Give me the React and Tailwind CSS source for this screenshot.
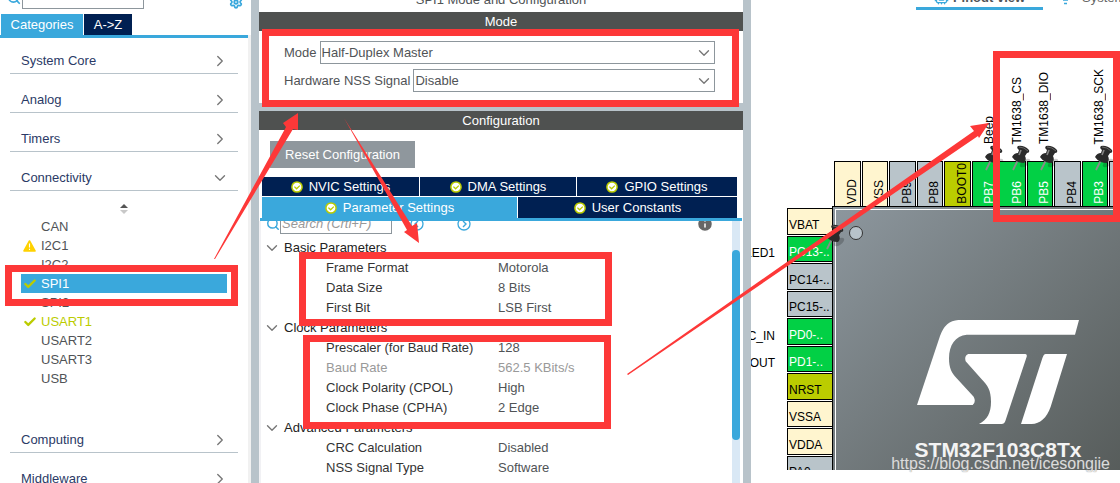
import React, { useState } from "react"
import { Search, Settings, ChevronRight, ChevronDown, Check, Cpu, Info } from "lucide-react"

const PERIPHERALS = [
  { name: "CAN" },
  { name: "I2C1", status: "warning" },
  { name: "I2C2" },
  { name: "SPI1", status: "ok" },
  { name: "SPI2" },
  { name: "USART1", status: "ok" },
  { name: "USART2" },
  { name: "USART3" },
  { name: "USB" },
]

const PARAMETERS = [
  {
    title: "Basic Parameters",
    rows: [
      { label: "Frame Format", value: "Motorola" },
      { label: "Data Size", value: "8 Bits" },
      { label: "First Bit", value: "LSB First" },
    ],
  },
  {
    title: "Clock Parameters",
    rows: [
      { label: "Prescaler (for Baud Rate)", value: "128" },
      { label: "Baud Rate", value: "562.5 KBits/s", readOnly: true },
      { label: "Clock Polarity (CPOL)", value: "High" },
      { label: "Clock Phase (CPHA)", value: "2 Edge" },
    ],
  },
  {
    title: "Advanced Parameters",
    rows: [
      { label: "CRC Calculation", value: "Disabled" },
      { label: "NSS Signal Type", value: "Software" },
    ],
  },
]

const PIN_COLORS = {
  power: "bg-[#fff5cf] text-black",
  free: "bg-[#b9c4ca] text-black",
  reset: "bg-[#bbcc00] text-black",
  used: "bg-[#02d045] text-white",
}

const TOP_PINS = [
  { name: "VDD", kind: "power" },
  { name: "VSS", kind: "power" },
  { name: "PB9", kind: "free" },
  { name: "PB8", kind: "free" },
  { name: "BOOT0", kind: "reset" },
  { name: "PB7", kind: "used", signal: "Beep" },
  { name: "PB6", kind: "used", signal: "TM1638_CS" },
  { name: "PB5", kind: "used", signal: "TM1638_DIO" },
  { name: "PB4", kind: "free" },
  { name: "PB3", kind: "used", signal: "TM1638_SCK" },
  { name: "PA15", kind: "free" },
  { name: "PA14", kind: "free" },
]

const LEFT_PINS = [
  { name: "VBAT", kind: "power" },
  { name: "PC13-..", kind: "used", signal: "LED1", pinned: true },
  { name: "PC14-..", kind: "free" },
  { name: "PC15-..", kind: "free" },
  { name: "PD0-..", kind: "used", signal: "RCC_OSC_IN" },
  { name: "PD1-..", kind: "used", signal: "RCC_OSC_OUT" },
  { name: "NRST", kind: "reset" },
  { name: "VSSA", kind: "power" },
  { name: "VDDA", kind: "power" },
  { name: "PA0-..", kind: "free" },
]

const StatusIcon = ({ status }) => {
  if (status === "ok") return <Check className="size-[14px] text-[#bbcc00]" strokeWidth={4} />
  if (status === "warning") {
    return (
      <svg viewBox="0 0 13 12" className="h-3 w-[13px]">
        <path d="M6.5 1 L12 11 H1 Z" fill="#ffd200" stroke="#ffd200" strokeWidth="1.6" strokeLinejoin="round" />
        <path d="M6.5 3.5 V7.5 M6.5 8.7 V10" stroke="#fff" strokeWidth="1.1" />
      </svg>
    )
  }
  return null
}

const CategoryRow = ({ name, open }) => {
  const Icon = open ? ChevronDown : ChevronRight
  return (
    <button className="mx-[10px] flex h-[39px] items-center justify-between border-b border-[#b8c3ca] pt-[13px] pr-[9px] pl-[11px] text-left text-[#2b3a66]">
      <span>{name}</span>
      <Icon className="size-[18px] text-[#777]" strokeWidth={1.8} />
    </button>
  )
}

const Sidebar = () => {
  const [selected, setSelected] = useState("SPI1")

  return (
    <aside className="flex w-[251px] shrink-0 flex-col overflow-hidden">
      <div className="flex h-[14px] shrink-0 items-end justify-between pr-2 pb-[5px] pl-[7px]">
        <div className="flex items-end gap-px">
          <Search className="mb-1 size-[14px] text-[#3aa8dc]" strokeWidth={3} />
          <input aria-label="Search peripherals" className="h-[22px] w-[122px] border border-[#8d969c] px-1" />
        </div>
        <Settings className="size-[14px] text-[#3aa8dc]" strokeWidth={3} />
      </div>
      <div className="mr-[2px] flex h-6 shrink-0 gap-px border-b-[3px] border-[#3aa8dc] pl-px text-white">
        <button className="w-[82px] bg-[#3aa8dc]">Categories</button>
        <button className="w-12 bg-[#002052]">A-&gt;Z</button>
      </div>
      <div className="-mt-[3px] flex flex-col border-r-[3px] border-[#f1f1f1]">
        <CategoryRow name="System Core" />
        <CategoryRow name="Analog" />
        <CategoryRow name="Timers" />
        <CategoryRow name="Connectivity" open />
        <div className="flex h-[26px] items-center justify-center pt-2">
          <svg viewBox="0 0 8 11" className="h-[11px] w-2">
            <path d="M0 5 L4 1 L8 5 Z" fill="#555" />
            <path d="M0 7 L4 11 L8 7 Z" fill="#c8c8c8" />
          </svg>
        </div>
        <ul className="mx-[21px] mb-[26px]">
          {PERIPHERALS.map((item) => {
            const active = item.name === selected
            const color = active
              ? "bg-[#3aa8dc] text-white"
              : item.status === "ok"
                ? "text-[#bbcc00]"
                : "text-[#505356]"
            return (
              <li key={item.name}>
                <button onClick={() => setSelected(item.name)} className={`flex h-[19px] w-full items-center ${color}`}>
                  <span className="flex w-5 pl-[2px]">
                    <StatusIcon status={item.status} />
                  </span>
                  {item.name}
                </button>
              </li>
            )
          })}
        </ul>
        <CategoryRow name="Computing" />
        <CategoryRow name="Middleware" />
      </div>
    </aside>
  )
}

const SectionBar = ({ children }) => (
  <h2 className="flex h-[19px] shrink-0 items-center justify-center bg-[#4f5150] text-white">{children}</h2>
)

const SelectField = ({ id, label, options }) => (
  <div className="flex h-[23px] items-center gap-[3px]">
    <label htmlFor={id}>{label}</label>
    <div className="relative h-full flex-1">
      <select id={id} className="h-full w-full appearance-none border border-[#8d969c] bg-white px-px">
        {options.map((option) => (
          <option key={option}>{option}</option>
        ))}
      </select>
      <ChevronDown className="pointer-events-none absolute top-[3px] right-[2px] size-[18px] text-[#777]" strokeWidth={1.8} />
    </div>
  </div>
)

const TabButton = ({ active, className, children }) => (
  <button className={`flex items-center justify-center gap-[6px] text-white ${active ? "bg-[#3aa8dc]" : "bg-[#002052]"} ${className}`}>
    <svg viewBox="0 0 12 12" className="size-3">
      <circle cx="6" cy="6" r="5.1" fill="#fff" stroke="#bbcc00" strokeWidth="1.5" />
      <path d="M3.4 5.6 L5.6 7.8 L8.8 4.6" fill="none" stroke="#bbcc00" strokeWidth="1.3" />
    </svg>
    {children}
  </button>
)

const NavCircle = ({ flip }) => (
  <svg viewBox="0 0 14 14" className={`size-[14px] ${flip ? "-scale-x-100" : ""}`} fill="none" stroke="#3aa8dc">
    <circle cx="7" cy="7" r="6" strokeWidth="1.3" />
    <path d="M6 4 L9 7 L6 10" strokeWidth="1.4" />
  </svg>
)

const ParameterTree = () => (
  <div className="flex min-h-0 flex-1 overflow-hidden border-l-2 border-[#f1f1f4]">
    <div className="-mt-2 flex-1">
      <div className="mb-1 flex h-[21px] items-center pl-[5px]">
        <Search className="size-[14px] text-[#3aa8dc]" strokeWidth={2.5} />
        <input
          aria-label="Search parameters"
          placeholder="Search (Crtl+F)"
          className="h-[21px] w-28 border border-[#8d969c] px-px italic placeholder:text-[#999]"
        />
        <div className="ml-[18px] flex gap-[33px]">
          <NavCircle flip />
          <NavCircle />
        </div>
        <Info className="mr-[18px] ml-auto size-[18px] fill-[#666] text-white" strokeWidth={2} />
      </div>
      {PARAMETERS.map((group) => (
        <section key={group.title}>
          <h3 className="flex h-5 items-center gap-[3px] pl-[2px] text-[#222]">
            <ChevronDown className="size-[18px] text-[#777]" strokeWidth={1.8} />
            {group.title}
          </h3>
          <dl>
            {group.rows.map((row) => (
              <div key={row.label} className={`flex h-5 items-center pl-[65px] ${row.readOnly ? "text-[#999]" : "text-[#505356]"}`}>
                <dt className={`w-[172px] ${row.readOnly ? "" : "text-[#333]"}`}>{row.label}</dt>
                <dd>{row.value}</dd>
              </div>
            ))}
          </dl>
        </section>
      ))}
    </div>
    <div className="mr-[3px] w-2 bg-[#d9e8f5] pt-[29px]">
      <div className="h-[190px] rounded-full bg-[#3aa8dc]" />
    </div>
  </div>
)

const ConfigPanel = () => (
  <section className="flex w-[500px] shrink-0 flex-col overflow-hidden border-x-8 border-[#b8c3ca] text-[#505356]">
    <h1 className="flex h-3 shrink-0 items-end justify-center pb-1">SPI1 Mode and Configuration</h1>
    <SectionBar>Mode</SectionBar>
    <div className="flex flex-col gap-[5px] border-b-8 border-[#b8c3ca] pt-[10px] pr-7 pb-[11px] pl-[25px]">
      <SelectField id="mode" label="Mode" options={["Half-Duplex Master", "Full-Duplex Master", "Disable"]} />
      <SelectField id="nss" label="Hardware NSS Signal" options={["Disable"]} />
    </div>
    <SectionBar>Configuration</SectionBar>
    <button className="mt-[11px] mb-[9px] ml-[11px] h-[27px] w-[145px] shrink-0 bg-[#8f979d] text-white">
      Reset Configuration
    </button>
    <div className="mr-[6px] ml-[3px] flex flex-col gap-px">
      <div className="flex h-[19px] gap-px">
        <TabButton className="w-[157px]">NVIC Settings</TabButton>
        <TabButton className="w-[156px]">DMA Settings</TabButton>
        <TabButton className="flex-1">GPIO Settings</TabButton>
      </div>
      <div className="flex h-[21px] gap-px">
        <TabButton active className="w-[255px]">Parameter Settings</TabButton>
        <TabButton className="flex-1">User Constants</TabButton>
      </div>
    </div>
    <div className="mx-px h-[3px] shrink-0 bg-[#3aa8dc]" />
    <ParameterTree />
  </section>
)

const PushPin = ({ className }) => (
  <svg viewBox="0 0 20 26" className={`pointer-events-none absolute h-[26px] w-5 ${className}`}>
    <ellipse cx="14" cy="18" rx="6" ry="3" fill="#000" opacity="0.2" transform="rotate(-35 14 18)" />
    <path d="M7 15 L2 25" stroke="#8a8a8a" strokeWidth="1.8" />
    <path d="M1 12 Q3 8 7 8 L8 5 Q5 3 7 1 Q13 0 18 5 Q19 8 16 8 L14 11 Q16 15 13 18 Q5 18 1 12 Z" fill="#2b2b2b" />
    <path d="M10 5 L8 10" stroke="#888" strokeWidth="1.6" />
    <path d="M8 2 Q13 2 17 6" fill="none" stroke="#666" strokeWidth="1" />
  </svg>
)

const StLogo = () => (
  <svg viewBox="51 90 486 312" className="h-[104px] w-[162px]" fill="#fff">
    <path d="M175 90 H537 L525 134 H200 C166 137 147 165 147 205 C147 234 155 249 170 265 L221 320 Q229 336 218 345 H51 L120 138 Q136 92 175 90 Z" />
    <path d="M205 192 H376 Q382 193 380 200 L316 393 Q313 402 305 402 H237 C262 389 273 368 273 335 C273 301 263 286 245 268 L197 214 Q192 197 205 192 Z" />
    <path d="M437 192 H501 L452 350 C440 384 420 401 395 402 H363 L427 205 Q431 192 437 192 Z" />
  </svg>
)

const PinoutView = () => (
  <main className="flex min-w-0 flex-1 flex-col overflow-hidden pb-[13px] text-xs text-black">
    <nav className="flex h-[10px] shrink-0 items-end pl-[165px] text-[13px] whitespace-nowrap">
      <button className="flex h-[22px] w-[127px] shrink-0 items-center justify-center gap-1 border-b-[3px] border-[#3aa8dc] font-bold text-[#505356]">
        <Cpu className="size-[15px] text-[#3aa8dc]" />
        Pinout view
      </button>
      <button className="ml-5 flex h-[22px] shrink-0 items-center gap-[14px] pb-[3px] text-[#666]">
        <svg viewBox="0 0 5 14" className="h-[14px] w-[5px]">
          <path d="M0 6 H5 M0 9 H5 M1 12.5 H4" stroke="#3aa8dc" strokeWidth="1.5" />
        </svg>
        System view
      </button>
    </nav>

    <div className="ml-[83px] grid h-[196px] w-[330px] shrink-0 grid-cols-12">
      {TOP_PINS.map((pin) => (
        <div key={pin.name} className="relative flex flex-col justify-end pr-px">
          {pin.signal && (
            <span className="mr-px mb-[17px] rotate-180 self-end leading-4 [writing-mode:vertical-rl]">{pin.signal}</span>
          )}
          <div className={`flex h-[45px] items-end justify-end border border-b-0 border-black pb-[2px] ${PIN_COLORS[pin.kind]}`}>
            <span className="rotate-180 leading-4 [writing-mode:vertical-rl]">{pin.name}</span>
          </div>
          {pin.signal && <PushPin className="bottom-[35px] left-3" />}
        </div>
      ))}
    </div>

    <div className="flex min-h-0 flex-1 overflow-hidden">
      <div className="mt-[2px] grid h-[275px] w-[81px] shrink-0 grid-rows-10">
        {LEFT_PINS.map((pin) => (
          <div key={pin.name} className="relative flex min-w-0 pb-px">
            <span className="flex w-9 shrink-0 items-end justify-end overflow-hidden pr-3 pb-px leading-4 whitespace-nowrap">
              {pin.signal}
            </span>
            <div className={`flex flex-1 items-end border border-r-0 border-black pb-px pl-px leading-4 ${PIN_COLORS[pin.kind]}`}>
              {pin.name}
            </div>
            {pin.pinned && <PushPin className="-top-[12px] left-[74px] z-10" />}
          </div>
        ))}
      </div>
      <div className="w-[332px] shrink-0 border-t border-l border-black bg-linear-135 from-[#8d979e] to-[#535856] pt-[2px] pl-[2px]">
        <div className="flex h-full flex-col items-center border-t border-l border-white">
          <div className="mt-4 ml-[13px] size-[14px] self-start rounded-full border border-[#333] bg-[#b8c3ca]" />
          <div className="mt-20 pr-1">
            <StLogo />
          </div>
          <p className="mt-[14px] pr-1 text-[21px] leading-6 font-bold text-[#f4f4f4]">STM32F103C8Tx</p>
        </div>
      </div>
    </div>
  </main>
)

// Highlight boxes and arrows laid over the three panes
const Annotations = () => (
  <svg viewBox="0 0 1120 483" className="pointer-events-none absolute top-0 left-0 z-20 h-[483px] w-[1120px]">
    <g fill="none" stroke="#fd3838" strokeWidth="7">
      <rect x="265.5" y="32.5" width="470" height="71" />
      <rect x="8.5" y="268.5" width="226" height="34" />
      <rect x="302.5" y="255.5" width="306" height="67" />
      <rect x="306.5" y="338.5" width="301" height="87" />
      <rect x="996.5" y="54.5" width="120" height="164" />
    </g>
    <g fill="#fd3838">
      <path d="M214 259 L286 127 L283 123 L298 113 L298 130 L293 129 L215 259 Z" />
      <path d="M344 118 L412 226 L417 223 L419 243 L404 232 L407 230 Z" />
      <path d="M627 374 L974 131 L970 126 L989 123 L979 138 L978 136 L628 375 Z" />
    </g>
  </svg>
)

const App = () => (
  <div className="relative flex h-screen overflow-hidden bg-white font-['Liberation_Sans',Arial,sans-serif] text-[13px] leading-4">
    <Sidebar />
    <ConfigPanel />
    <PinoutView />
    <Annotations />
    <p className="absolute right-[10px] bottom-[9px] z-30 text-base leading-5 text-white/75 [text-shadow:0_0_1px_#777]">
      https://blog.csdn.net/icesongjie
    </p>
  </div>
)

export default App
